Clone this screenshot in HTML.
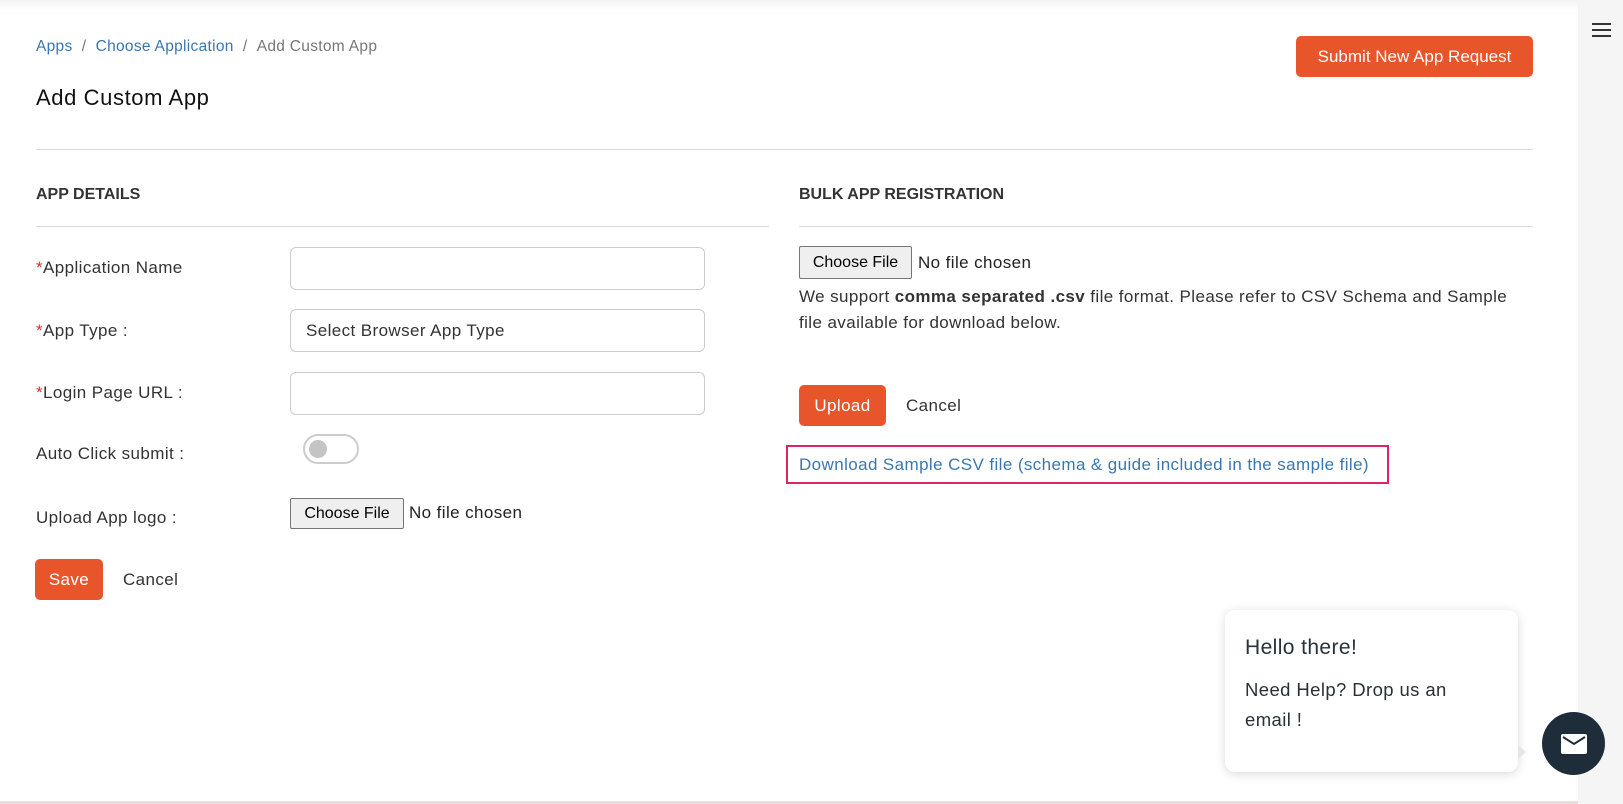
<!DOCTYPE html>
<html><head><meta charset="utf-8"><style>
*{box-sizing:border-box;margin:0;padding:0}
body{width:1623px;height:804px;position:relative;overflow:hidden;background:#fff;font-family:"Liberation Sans",sans-serif;color:#333;font-size:17px;letter-spacing:0.4px}
.a{position:absolute;white-space:nowrap}
.lnk{color:#3a77b0}
.hr{position:absolute;height:1px;background:#d8d8d8}
.inp{position:absolute;border:1px solid #ccc;border-radius:6px;background:#fff}
.btn{position:absolute;background:#e8552a;color:#fff;border-radius:5px;text-align:center}
.fb{position:absolute;background:#efefef;border:1px solid #767676;border-radius:2px;font-size:16px;letter-spacing:0;color:#000;text-align:center}
.req{color:#d0312d}
</style></head><body>
<div class="a" style="left:0;top:0;width:1578px;height:10px;background:linear-gradient(#f2f2f2,#fff)"></div>
<div class="a" style="left:1578px;top:0;width:45px;height:804px;background:#f5f5f5"></div>
<div class="a" style="left:1592px;top:23px;width:19px;height:2px;background:#333"></div>
<div class="a" style="left:1592px;top:29px;width:19px;height:2px;background:#333"></div>
<div class="a" style="left:1592px;top:35px;width:19px;height:2px;background:#333"></div>

<div class="a" style="left:36px;top:38px;font-size:15.5px;letter-spacing:0.3px;color:#777"><span class="lnk">Apps</span>&nbsp;&nbsp;/&nbsp;&nbsp;<span class="lnk">Choose Application</span>&nbsp;&nbsp;/&nbsp;&nbsp;Add Custom App</div>
<div class="a" style="left:36px;top:85px;font-size:22px;letter-spacing:0.6px;color:#111">Add Custom App</div>
<div class="btn" style="left:1296px;top:36px;width:237px;height:41px;line-height:41px;font-size:17px;letter-spacing:0">Submit New App Request</div>
<div class="hr" style="left:36px;top:149px;width:1497px"></div>

<div class="a" style="left:36px;top:186px;font-size:16px;letter-spacing:0;font-weight:bold;color:#333">APP DETAILS</div>
<div class="hr" style="left:36px;top:226px;width:733px"></div>
<div class="a" style="left:799px;top:186px;font-size:16px;letter-spacing:0;font-weight:bold;color:#333">BULK APP REGISTRATION</div>
<div class="hr" style="left:799px;top:226px;width:734px"></div>

<div class="a" style="left:36px;top:258px"><span class="req">*</span>Application Name</div>
<div class="inp" style="left:290px;top:247px;width:415px;height:43px"></div>
<div class="a" style="left:36px;top:321px"><span class="req">*</span>App Type :</div>
<div class="inp" style="left:290px;top:309px;width:415px;height:43px"></div>
<div class="a" style="left:306px;top:321px">Select Browser App Type</div>
<div class="a" style="left:36px;top:383px"><span class="req">*</span>Login Page URL :</div>
<div class="inp" style="left:290px;top:372px;width:415px;height:43px"></div>
<div class="a" style="left:36px;top:444px">Auto Click submit :</div>
<div class="a" style="left:303px;top:434px;width:56px;height:30px;border:2px solid #ccc;border-radius:15px;background:#fff"></div>
<div class="a" style="left:309px;top:440px;width:18px;height:18px;border-radius:50%;background:#c4c4c4"></div>
<div class="a" style="left:36px;top:508px">Upload App logo :</div>
<div class="fb" style="left:290px;top:498px;width:114px;height:31px;line-height:29px">Choose File</div>
<div class="a" style="left:409px;top:503px;color:#222">No file chosen</div>
<div class="btn" style="left:35px;top:559px;width:68px;height:41px;line-height:41px">Save</div>
<div class="a" style="left:123px;top:570px">Cancel</div>

<div class="fb" style="left:799px;top:246px;width:113px;height:33px;line-height:31px">Choose File</div>
<div class="a" style="left:918px;top:253px;color:#222">No file chosen</div>
<div class="a" style="left:799px;top:284px;line-height:26px">We support <b>comma separated .csv</b> file format. Please refer to CSV Schema and Sample<br>file available for download below.</div>
<div class="btn" style="left:799px;top:385px;width:87px;height:41px;line-height:41px;font-size:17px">Upload</div>
<div class="a" style="left:906px;top:396px">Cancel</div>
<div class="a" style="left:786px;top:445px;width:603px;height:39px;border:2px solid #e0245e"></div>
<div class="a lnk" style="left:799px;top:455px">Download Sample CSV file (schema &amp; guide included in the sample file)</div>

<div class="a" style="left:1225px;top:610px;width:293px;height:162px;background:#fff;border-radius:10px;box-shadow:0 2px 10px rgba(0,0,0,0.15)"></div>
<div class="a" style="left:1245px;top:636px;font-size:21px;color:#263238">Hello there!</div>
<div class="a" style="left:1245px;top:675px;font-size:18.5px;color:#263238;line-height:30px">Need Help? Drop us an<br>email !</div>
<div class="a" style="left:1518px;top:745px;width:0;height:0;border-top:7px solid transparent;border-bottom:7px solid transparent;border-left:8px solid #e6e6e6"></div>
<div class="a" style="left:1542px;top:712px;width:63px;height:63px;border-radius:50%;background:#1f2d3a"></div>
<svg class="a" style="left:1561px;top:734px" width="26" height="20" viewBox="0 0 26 20"><rect x="0" y="0" width="26" height="20" rx="2" fill="#fff"/><path d="M2 3 L13 10 L24 3" stroke="#1f2d3a" stroke-width="2" fill="none"/></svg>
<div class="a" style="left:0;top:801px;width:1578px;height:3px;background:#ecdcdc"></div>
</body></html>
